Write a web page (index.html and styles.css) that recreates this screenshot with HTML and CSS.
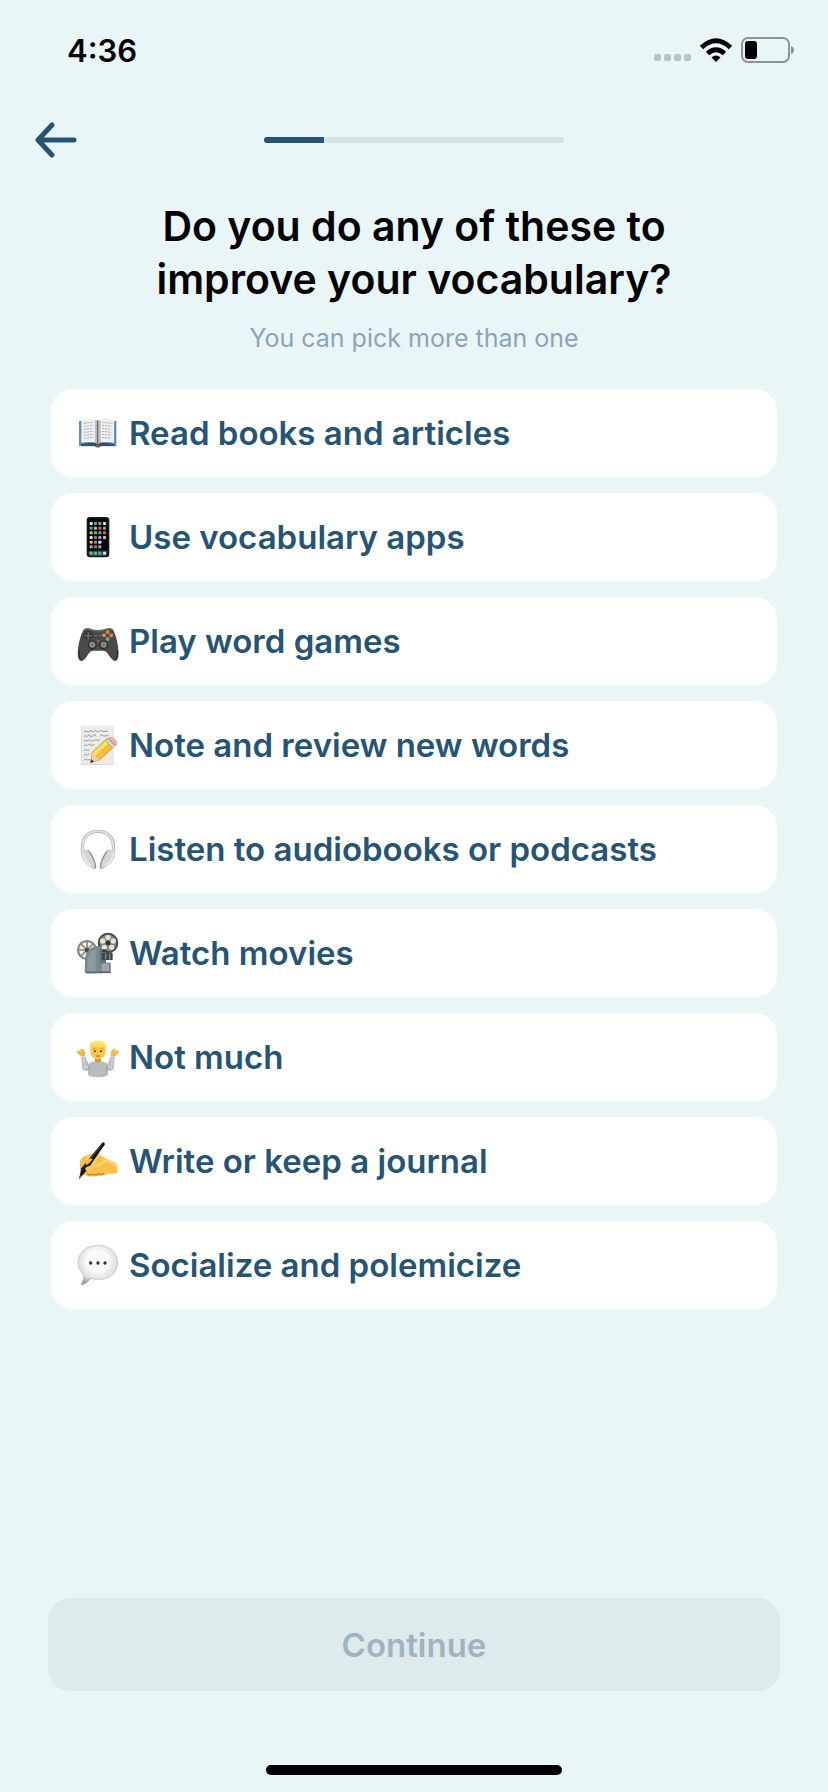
FILE: index.html
```html
<!DOCTYPE html>
<html lang="en">
<head>
  <meta charset="UTF-8" />
  <meta name="viewport" content="width=device-width, initial-scale=1.0" />
  <title>Improve your vocabulary</title>
  <link rel="stylesheet" href="styles.css">
</head>
<body>
  <div class="status-bar">
    <span class="time">4:36</span>
    <div class="status-icons">
      <svg class="signal" viewBox="0 0 37 26" fill="#b9c4c7"><rect x="0" y="17" width="7" height="7" rx="2"/><rect x="10" y="17" width="7" height="7" rx="2"/><rect x="20" y="17" width="7" height="7" rx="2"/><rect x="30" y="17" width="7" height="7" rx="2"/></svg>
      <svg class="wifi" viewBox="0 0 34 26" fill="none" stroke="#000" stroke-width="5"><path d="M2.500 10.500Q17-3 31.500 10.500M8.500 16.500Q17 9 25.500 16.500"/><path d="M12.500 20.500Q17 16.500 21.500 20.500L17 25z" fill="#000" stroke="none"/></svg>
      <svg class="battery" viewBox="0 0 54 26"><rect x="1" y="1" width="47" height="24" rx="6" fill="none" stroke="#8b9496" stroke-width="2"/><rect x="4" y="4" width="12" height="18" rx="3"/><path d="M50 9q3 1 3 4t-3 4z" fill="#8b9496"/></svg>
    </div>
  </div>

  <header class="top-bar">
    <button class="back" type="button" aria-label="Back">
      <svg viewBox="0 0 44 36" fill="none" stroke="currentColor" stroke-width="5" stroke-linecap="round" stroke-linejoin="round"><path d="M40 18H4M18 3L4 18l14 15"/></svg>
    </button>
    <div class="progress" role="progressbar" aria-label="Progress" aria-valuenow="20" aria-valuemin="0" aria-valuemax="100">
      <div class="progress-fill" style="width: 20%"></div>
    </div>
  </header>

  <main>
    <h1>Do you do any of these to improve your vocabulary?</h1>
    <p class="hint">You can pick more than one</p>

    <form class="options" id="habits">
      <label class="option">
        <input type="checkbox" name="habit" value="books">
        <svg viewBox="0 0 168 168">
          <path d="M27 48h112v76H94q-10 6-20 0H27z" fill="#5c91b3"/>
          <path d="M33 117l50-6 50 6v5l-39 1q-11 5-22 0l-39-1z" fill="#36505d"/>
          <path d="M34 44q28-6 49 3v68q-22-7-49-2zM132 44q-28-6-48 3v68q21-7 48-2z" fill="#f0f0f2"/>
          <path d="M75 44l8 3 9-3v69l-9 3-8-3z" fill="#bcbdc2"/>
          <path d="M83 46v68" stroke="#56585c" stroke-width="3"/>
          <path d="M41 55l29-3M41 64l30-3M41 73l27-3M41 82l30-3M41 91l28-3M41 100l29-3M96 52l29 3M96 61l29 3M96 70l27 3M96 79l29 3M96 88l28 3M96 97l27 3" stroke="#b2b3ba" stroke-width="3" stroke-dasharray="7 2"/>
          <path d="M78 119h12v8H78z" fill="#6e6338"/>
        </svg>
        <span>Read books and articles</span>
      </label>
      <label class="option">
        <input type="checkbox" name="habit" value="apps">
        <svg viewBox="0 0 168 168">
          <rect x="50" y="24" width="68" height="121" rx="10" fill="#17181b"/>
          <rect x="54" y="29" width="60" height="112" rx="6" fill="#050607"/>
          <path d="M55 125h58v10q0 6-6 6H61q-6 0-6-6z" fill="#264a42"/>
          <g fill="#d9e5ed"><rect x="59" y="39" width="9" height="9" rx="2"/><rect x="99" y="39" width="9" height="9" rx="2"/><rect x="59" y="81" width="9" height="9" rx="2"/><rect x="85" y="95" width="9" height="9" rx="2"/><rect x="99" y="128" width="9" height="9" rx="2"/></g>
          <g fill="#4ba7cc"><rect x="72" y="39" width="9" height="9" rx="2"/><rect x="59" y="53" width="9" height="9" rx="2"/><rect x="85" y="67" width="9" height="9" rx="2"/><rect x="72" y="95" width="9" height="9" rx="2"/><rect x="85" y="128" width="9" height="9" rx="2"/></g>
          <g fill="#68bd79"><rect x="85" y="39" width="9" height="9" rx="2"/><rect x="72" y="67" width="9" height="9" rx="2"/><rect x="99" y="53" width="9" height="9" rx="2"/><rect x="59" y="128" width="9" height="9" rx="2"/><rect x="72" y="128" width="9" height="9" rx="2"/></g>
          <g fill="#e4bd4c"><rect x="72" y="53" width="9" height="9" rx="2"/><rect x="59" y="67" width="9" height="9" rx="2"/><rect x="99" y="81" width="9" height="9" rx="2"/><rect x="59" y="95" width="9" height="9" rx="2"/></g>
          <g fill="#e15772"><rect x="85" y="53" width="9" height="9" rx="2"/><rect x="99" y="67" width="9" height="9" rx="2"/><rect x="72" y="81" width="9" height="9" rx="2"/><rect x="72" y="109" width="9" height="9" rx="2"/></g>
          <g fill="#a8a7b7"><rect x="85" y="81" width="9" height="9" rx="2"/><rect x="59" y="109" width="9" height="9" rx="2"/><rect x="85" y="109" width="9" height="9" rx="2"/></g>
        </svg>
        <span>Use vocabulary apps</span>
      </label>
      <label class="option">
        <input type="checkbox" name="habit" value="games">
        <svg viewBox="0 0 168 168">
          <path d="M39 53q6-10 22-6 8 4 23 4t24-4q16-4 23 6 13 29 15 67-1 24-11 24-8 0-23-24-5-7-12-7H69q-6 0-12 7-14 24-22 24-12 0-12-24 2-38 16-67z" fill="#484b48"/>
          <path d="M40 53q7-8 20-4 10 5 24 5t25-5q14-4 21 4" fill="none" stroke="#686b66" stroke-width="4"/>
          <path d="M28 112q-2 22 7 29M142 112q1 22-7 29" fill="none" stroke="#2c2e2c" stroke-width="4"/>
          <path d="M55 54v28M41 68h28" stroke="#242624" stroke-width="12"/>
          <path d="M55 56v24M43 68h24" stroke="#666a66" stroke-width="6"/>
          <g fill="#292a29"><circle cx="67" cy="96" r="13"/><circle cx="101" cy="96" r="13"/></g>
          <g fill="#969b96"><circle cx="67" cy="95" r="9"/><circle cx="101" cy="95" r="9"/></g>
          <g fill="#747a75"><circle cx="67" cy="95" r="6"/><circle cx="101" cy="95" r="6"/></g>
          <g fill="#d98349"><circle cx="113" cy="57" r="6"/><circle cx="102" cy="67" r="6"/><circle cx="124" cy="67" r="6"/></g>
          <circle cx="113" cy="78" r="6" fill="#8d918c"/>
          <circle cx="84" cy="84" r="4" fill="#b05642"/><path d="M75 68h5M88 68h5" stroke="#8a8d88" stroke-width="3"/>
        </svg>
        <span>Play word games</span>
      </label>
      <label class="option">
        <input type="checkbox" name="habit" value="notes">
        <svg viewBox="0 0 168 168">
          <path d="M33 26h98v118H33z" fill="#d8d9d9"/><path d="M35 27h94v114H35z" fill="#ebebea"/>
          <g fill="none" stroke="#757575" stroke-width="2"><path d="M42 45q4-8 6 0l5-2 4 2 5-6 3 5h7l4-4 5 4 7-1 5-3 5 3h16M41 60l5-4 4 3 7-6 3 5 10-1 4-5 4 6M90 57l6-4 4 4 16-1M41 73l7-4 3 3 7-4 5 4 10-1 5-4 5 3 7-1M41 87l5-3 7 1 6-4 3 4 12-2M41 102l5-5 4 3 8-1M41 116l5-4 5 2 7-3M41 130l6-5 3 4 10-1"/></g>
          <path d="M60 139l6-34 46-43 24 24-46 43z" fill="#c98b20"/>
          <path d="M66 108l47-44 10 10-47 44z" fill="#ffe062"/>
          <path d="M75 119l47-46 12 12-46 44z" fill="#f6bd34"/>
          <path d="M61 138l6-31 10 11 11 10z" fill="#eed1a0"/><path d="M61 138l3-12 8 8z" fill="#3e3c3a"/>
          <path d="M106 72l10-9 22 22-10 9z" fill="#a4b5b7"/><path d="M111 69l21 21" stroke="#e5eeee" stroke-width="4"/>
          <path d="M115 64q6-8 14-2l10 10q6 7-2 15z" fill="#e99895"/><path d="M121 62l18 18" stroke="#f7bbb5" stroke-width="4"/>
        </svg>
        <span>Note and review new words</span>
      </label>
      <label class="option">
        <input type="checkbox" name="habit" value="audio">
        <svg viewBox="0 0 168 168">
          <path d="M38 96C33 55 49 31 84 31s51 24 46 65" fill="none" stroke="#a9abae" stroke-width="10"/>
          <path d="M38 94C34 55 49 31 84 31s50 24 46 63" fill="none" stroke="#e1e2e3" stroke-width="6"/>
          <path d="M46 87q9-3 17 8 14 22 16 42 0 7-7 6-9-2-18-17-12-18-8-39zM122 87q-9-3-17 8-14 22-16 42 0 7 7 6 9-2 18-17 12-18 8-39z" fill="#8d9094"/>
          <path d="M41 88q9-8 17 7 16 25 17 43-3 5-14-1-18-8-27-28-2-16 7-21zM127 88q-9-8-17 7-16 25-17 43 3 5 14-1 18-8 27-28 2-16-7-21z" fill="#d2d4d6"/>
          <path d="M41 97q-3 11 4 19 7 12 17 16M127 97q3 11-4 19-7 12-17 16" fill="none" stroke="#e9eaeb" stroke-width="5"/>
        </svg>
        <span>Listen to audiobooks or podcasts</span>
      </label>
      <label class="option">
        <input type="checkbox" name="habit" value="movies">
        <svg viewBox="0 0 168 168">
          <circle cx="51" cy="75" r="27" fill="#efeee8" stroke="#7a7770" stroke-width="6"/>
          <circle cx="51" cy="75" r="25" fill="none" stroke="#aaa59d" stroke-width="2"/>
          <path d="M51 48v54M26 75h50M33 57l36 36M69 57L33 93" stroke="#8a877f" stroke-width="5"/><circle cx="51" cy="75" r="7" fill="#48494b"/>
          <circle cx="114" cy="54" r="28" fill="#85827a" stroke="#4a4b47" stroke-width="6"/>
          <g fill="#e4e2d9"><circle cx="114" cy="37" r="8"/><circle cx="98" cy="48" r="8"/><circle cx="130" cy="48" r="8"/><circle cx="103" cy="67" r="8"/><circle cx="125" cy="67" r="8"/></g><circle cx="114" cy="54" r="7" fill="#333534"/>
          <path d="M45 106q0-29 24-40l17-4 10 9v74H50q-6 0-6-7z" fill="#78898f"/><path d="M53 105q0-25 24-33v73H52z" fill="#8c9ba0"/>
          <path d="M89 72h19v46H89z" fill="#60727a"/><path d="M95 84h33v21H95z" fill="#3d464c"/><path d="M107 86v17M119 85v19" stroke="#84939a" stroke-width="4"/>
          <path d="M89 113h33v31H89z" fill="#71828a"/><path d="M95 116h22v22H95z" fill="#99a7ac"/><path d="M48 142h74" stroke="#5b6b73" stroke-width="5"/><path d="M97 75h13v6H97z" fill="#353d42"/>
        </svg>
        <span>Watch movies</span>
      </label>
      <label class="option">
        <input type="checkbox" name="habit" value="none">
        <svg viewBox="0 0 168 168">
          <path d="M37 120l-3-35 12-3 9 23q9-9 29-9t29 9l9-23 12 3-3 35q-8 10-19 4v16q-28 9-56 0v-16q-11 6-19-4z" fill="#b9bbbe"/>
          <path d="M41 87l3 30 12-7M127 87l-3 30-12-7" fill="none" stroke="#d0d2d4" stroke-width="5"/><path d="M57 110v26M111 110v26" stroke="#95999d" stroke-width="3"/>
          <path d="M34 83q-14-9-13-19l12 3-4-8q13-1 17 12v9zM134 83q14-9 13-19l-12 3 4-8q-13-1-17 12v9z" fill="#f2b93a"/>
          <path d="M75 83h18v14q-9 8-18 0z" fill="#d59632"/>
          <path d="M61 59q0-21 23-21t23 21v10q-3 21-23 22-20-1-23-22z" fill="#f8c648"/>
          <path d="M59 64q-4-26 17-27 22-5 31 10 4 7 1 17l-7-10q-19 2-33-3z" fill="#ffd957"/><path d="M66 45q15-8 31 0" fill="none" stroke="#ffe77b" stroke-width="4"/>
          <path d="M69 61q4-4 8-3M91 58q4-1 8 3" fill="none" stroke="#a87428" stroke-width="2"/><g fill="#4f351b"><circle cx="75" cy="67" r="3"/><circle cx="93" cy="67" r="3"/></g><path d="M80 81h8" stroke="#9c6428" stroke-width="3" stroke-linecap="round"/>
        </svg>
        <span>Not much</span>
      </label>
      <label class="option">
        <input type="checkbox" name="habit" value="journal">
        <svg viewBox="0 0 168 168">
          <path d="M30 90q-1-14 15-21 22-9 37-8l22 14q15 7 29 13 9 2 9 6v27q-13 2-26 1-16 8-35 7-18 4-30-1-18-4-21-18z" fill="#f6bf46"/>
          <path d="M48 80q20-12 36-12l-18 20 16 10 29-16q16 9 30 14" fill="none" stroke="#ffd576" stroke-width="8"/>
          <path d="M52 122q7 7 16 0M66 123q8 7 18-1M82 121q10 6 20 0" fill="none" stroke="#c9862a" stroke-width="4"/>
          <path d="M95 31q7-7 10 3l-53 76-25 29 7-33z" fill="#17191a"/>
          <path d="M95 35L41 103" stroke="#4c4f50" stroke-width="3"/><path d="M26 139l5-12 5 4z" fill="#717777"/>
          <path d="M43 84q16-11 25-6-5 10-18 19" fill="#f1b845"/><path d="M52 108q16-5 29-15" fill="none" stroke="#f8c758" stroke-width="12" stroke-linecap="round"/>
        </svg>
        <span>Write or keep a journal</span>
      </label>
      <label class="option">
        <input type="checkbox" name="habit" value="social">
        <svg viewBox="0 0 168 168">
          <defs><radialGradient id="bubble" cx="50%" cy="40%" r="60%"><stop offset="45%" stop-color="#fafafa"/><stop offset="80%" stop-color="#dedede"/><stop offset="100%" stop-color="#a5a5a5"/></radialGradient></defs>
          <path d="M84 25c35 0 59 22 59 52s-24 51-58 51q-13 0-25-4-7 15-25 20-4 0-1-4 8-11 7-27Q24 98 24 77c0-30 25-52 60-52z" fill="url(#bubble)" stroke="#bcbcbc" stroke-width="2"/>
          <path d="M36 143q17-5 24-19" fill="none" stroke="#999" stroke-width="3"/><g fill="#333"><circle cx="62" cy="78" r="5"/><circle cx="84" cy="78" r="5"/><circle cx="105" cy="78" r="5"/></g>
        </svg>
        <span>Socialize and polemicize</span>
      </label>
    </form>
  </main>

  <footer>
    <button class="continue" type="submit" form="habits" disabled>Continue</button>
    <div class="home-indicator"></div>
  </footer>
</body>
</html>
```

FILE: styles.css
```css
:root {
  --bg-color: #e9f5f7;
  --primary-color: #265475;
  --muted-color: #8ba5b6;
  --track-color: #d6e3e5;
  --card-bg: #ffffff;
}
* { box-sizing: border-box; margin: 0; padding: 0; }
body {
  font-family: Inter, sans-serif;
  background: var(--bg-color);
  color: #000;
  min-height: 100vh;
  display: flex;
  flex-direction: column;
}
svg { display: block; flex: none; }
.status-bar {
  display: flex;
  align-items: center;
  justify-content: space-between;
  height: 100px;
  padding: 0 33px 0 67px;
}
.time { font-size: 31px; font-weight: 600; }
.status-icons { display: flex; gap: 8px; }
.signal { width: 37px; height: 26px; }
.wifi { width: 34px; height: 26px; }
.battery { width: 54px; height: 26px; }
.top-bar {
  display: grid;
  grid-template-columns: 1fr 300px 1fr;
  align-items: center;
  height: 80px;
  padding: 0 34px;
}
.back {
  justify-self: start;
  background: none;
  border: none;
  color: var(--primary-color);
  cursor: pointer;
}
.back svg { width: 44px; height: 36px; }
.progress {
  height: 6px;
  border-radius: 3px;
  background: var(--track-color);
  overflow: hidden;
}
.progress-fill { height: 100%; background: var(--primary-color); }
main { padding: 20px 51px 40px; }
h1 {
  max-width: 560px;
  margin: 0 auto;
  font-size: 41px;
  font-weight: 600;
  line-height: 53px;
  text-align: center;
}
.hint {
  margin: 16px 0 35px;
  font-size: 25px;
  line-height: 32px;
  text-align: center;
  color: var(--muted-color);
}
.options {
  display: flex;
  flex-direction: column;
  gap: 16px;
}
.option {
  position: relative;
  display: flex;
  align-items: center;
  gap: 3px;
  min-height: 88px;
  padding: 0 19px;
  border-radius: 22px;
  background: var(--card-bg);
  color: var(--primary-color);
  font-size: 33px;
  font-weight: 600;
  cursor: pointer;
}
.option input {
  position: absolute;
  inset: 0;
  appearance: none;
  border-radius: 22px;
  cursor: pointer;
}
.option input:checked { box-shadow: inset 0 0 0 3px var(--primary-color); }
.option svg { width: 56px; height: 56px; }
footer {
  margin-top: auto;
  padding: 0 48px 17px;
}
.continue {
  display: block;
  width: 100%;
  height: 93px;
  border: none;
  border-radius: 22px;
  background: #dfeaec;
  color: #a0b4c0;
  font-family: inherit;
  font-size: 33px;
  font-weight: 600;
}
.home-indicator {
  width: 296px;
  height: 10px;
  margin: 74px auto 0;
  border-radius: 5px;
  background: #000;
}
```
